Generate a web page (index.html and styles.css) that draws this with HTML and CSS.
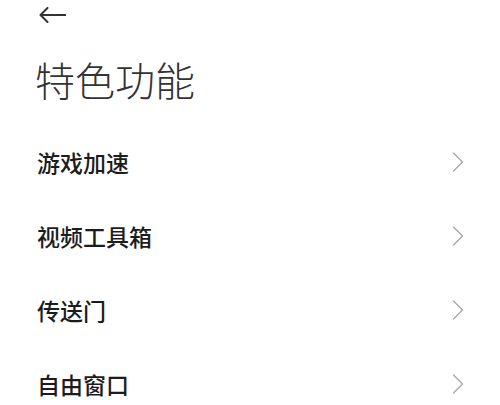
FILE: index.html
```html
<!DOCTYPE html>
<html lang="zh-CN">
<head>
<meta charset="utf-8">
<title>特色功能</title>
<link rel="stylesheet" href="styles.css">
</head>
<body>
<div class="page">
  <header class="topbar">
    <svg class="back" width="27" height="16" viewBox="0 0 27 16" aria-label="返回">
      <path d="M1.5 8 H26.5 M8.5 1 L1.5 8 L8.5 15" fill="none" stroke="#333" stroke-width="2" stroke-linecap="round" stroke-linejoin="round"/>
    </svg>
  </header>
  <h1 class="title">特色功能</h1>
  <ul class="list">
    <li class="row"><span class="label">游戏加速</span><svg class="chev" width="12" height="22" viewBox="0 0 12 22"><polyline points="1.5,2 10.5,11 1.5,20" fill="none" stroke="#a8a8a8" stroke-width="1.4" stroke-linecap="round" stroke-linejoin="round"/></svg></li>
    <li class="row"><span class="label">视频工具箱</span><svg class="chev" width="12" height="22" viewBox="0 0 12 22"><polyline points="1.5,2 10.5,11 1.5,20" fill="none" stroke="#a8a8a8" stroke-width="1.4" stroke-linecap="round" stroke-linejoin="round"/></svg></li>
    <li class="row"><span class="label">传送门</span><svg class="chev" width="12" height="22" viewBox="0 0 12 22"><polyline points="1.5,2 10.5,11 1.5,20" fill="none" stroke="#a8a8a8" stroke-width="1.4" stroke-linecap="round" stroke-linejoin="round"/></svg></li>
    <li class="row"><span class="label">自由窗口</span><svg class="chev" width="12" height="22" viewBox="0 0 12 22"><polyline points="1.5,2 10.5,11 1.5,20" fill="none" stroke="#a8a8a8" stroke-width="1.4" stroke-linecap="round" stroke-linejoin="round"/></svg></li>
  </ul>
</div>
</body>
</html>
```
FILE: styles.css
```css
html, body {
  margin: 0;
  padding: 0;
  background: #ffffff;
}
body {
  font-family: "Noto Sans CJK SC", "Noto Sans", sans-serif;
  color: #1a1a1a;
}
.page {
  width: 500px;
  height: 405px;
  overflow: hidden;
}
.topbar {
  height: 30px;
  display: flex;
  align-items: center;
  padding-left: 39px;
}
.back {
  display: block;
}
.title {
  margin: 29px 0 0 0;
  padding-left: 35px;
  height: 40px;
  font-size: 40px;
  line-height: 40px;
  font-weight: 300;
  color: #333333;
  letter-spacing: 0;
}
.list {
  list-style: none;
  margin: 26px 0 0 0;
  padding: 0;
}
.row {
  height: 74px;
  display: flex;
  align-items: center;
  justify-content: space-between;
  padding: 0 36px 0 37px;
}
.label {
  font-size: 23px;
  line-height: 23px;
  font-weight: 500;
  color: #1c1c1c;
}
.chev {
  display: block;
}
```
